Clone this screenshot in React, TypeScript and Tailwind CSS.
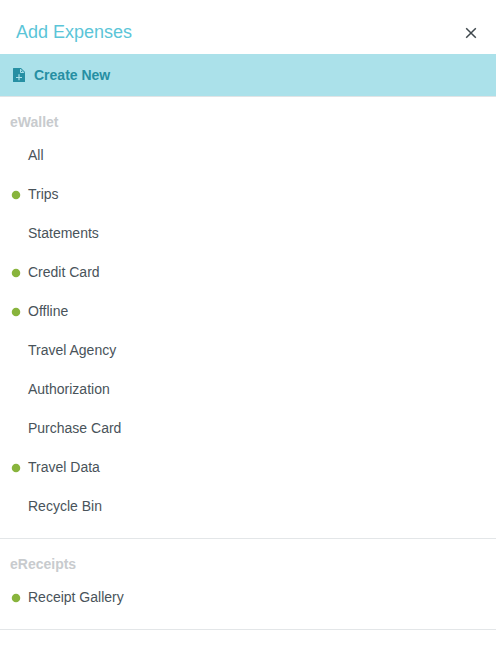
type Item = { label: string; active?: boolean };

const eWalletItems: Item[] = [
  { label: "All" },
  { label: "Trips", active: true },
  { label: "Statements" },
  { label: "Credit Card", active: true },
  { label: "Offline", active: true },
  { label: "Travel Agency" },
  { label: "Authorization" },
  { label: "Purchase Card" },
  { label: "Travel Data", active: true },
  { label: "Recycle Bin" },
];

const eReceiptItems: Item[] = [{ label: "Receipt Gallery", active: true }];

function Section({ title, items }: { title: string; items: Item[] }) {
  return (
    <section className="border-b border-[#e3e6e8] pt-[15px] pb-[13px]">
      <h2 className="pl-[10px] text-sm leading-5 font-bold text-[#c8cbce]">{title}</h2>
      <ul className="mt-[3px]">
        {items.map((item) => (
          <li key={item.label} className="flex h-[39px] items-center pl-3">
            <svg className="mt-[2px] mr-2 size-2 overflow-visible" viewBox="0 0 8 8">
              {item.active && <circle cx="4" cy="4" r="4.25" fill="#88b43c" />}
            </svg>
            <button className="text-sm leading-5 text-[#49535a]">{item.label}</button>
          </li>
        ))}
      </ul>
    </section>
  );
}

export default function App() {
  return (
    <div className="min-h-screen bg-white font-['Liberation_Sans',Arial,sans-serif]">
      <header className="flex h-[54px] items-center justify-between pt-[11px] pr-[19px] pl-4">
        <h1 className="mb-[2px] text-lg leading-6 text-[#5bc5d8]">Add Expenses</h1>
        <button aria-label="Close">
          <svg className="size-3" viewBox="0 0 12 12" fill="none" stroke="#3f484d" strokeWidth="1.5">
            <path d="M1.200 1.200l9.600 9.600M10.800 1.200L1.200 10.800" />
          </svg>
        </button>
      </header>

      {/* Create new */}
      <button className="flex h-[43px] w-full items-center border-b border-[#e0e4e6] bg-[#abe1ea] pl-[13px] text-sm font-bold text-[#268fa3]">
        <svg className="mr-[9px] h-[14px] w-3" viewBox="0 0 12 14" fill="none">
          <path d="M.5 0H8l4 4v9.500a.5.5 0 0 1-.5.5H.5a.5.5 0 0 1-.5-.5V.5A.5.5 0 0 1 .5 0z" fill="#268fa3" />
          <path d="M7.500 1.200v3.300h3.300z" stroke="#abe1ea" />
          <path d="M6 6.300v6M3 9.500h6" stroke="#abe1ea" strokeWidth="1.200" />
        </svg>
        Create New
      </button>

      <Section title="eWallet" items={eWalletItems} />
      <Section title="eReceipts" items={eReceiptItems} />
    </div>
  );
}
